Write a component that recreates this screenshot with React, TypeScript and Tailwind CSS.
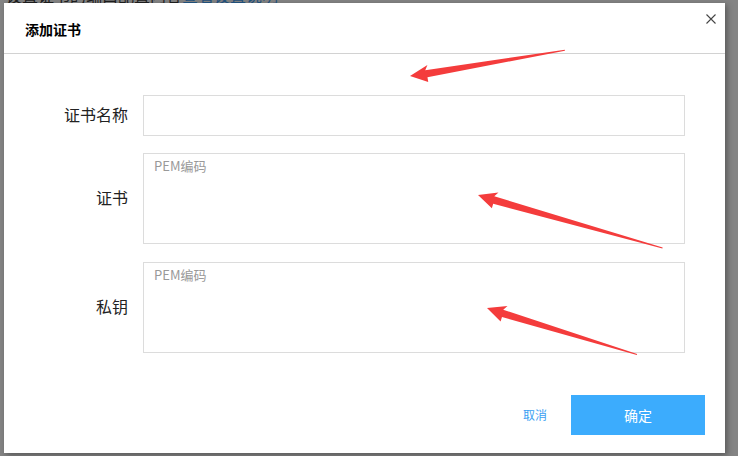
import React from "react";

// Arrow drawn with its tip at (0,0), body running along +x for `len` px
function Arrow({ x, y, angle, len }: { x: number; y: number; angle: number; len: number }) {
  const points = `0,0 19,-8 16,-3.2 ${len},-0.4 ${len},0.6 17,4.2 17,9`;
  return (
    <polygon
      points={points}
      fill="#f43c3c"
      transform={`translate(${x} ${y}) rotate(${angle})`}
    />
  );
}

export default function App() {
  const labelCls = "w-[124px] shrink-0 pb-[4px] text-right text-[16px] leading-[22px] text-[#222]";
  const boxCls = "ml-[15px] w-[542px] border border-[#dcdcdc] bg-white";

  return (
    <div
      className="relative w-[738px] h-[456px] overflow-hidden bg-[#848484]"
      style={{ fontFamily: '"Noto Sans CJK SC", "Noto Sans", sans-serif' }}
    >
      {/* page behind the overlay, only a sliver shows */}
      <div className="h-[3px] overflow-hidden pl-[6px]">
        <div className="-mt-[15px] whitespace-nowrap text-[16px] leading-[20px]">
          <span className="text-[#1c1c1c]">设置证书的端口配置内容</span>
          <span className="text-[#1f4f7a]">查看设置说明</span>
        </div>
      </div>

      {/* Dialog */}
      <div className="ml-[4px] w-[721px] h-[450px] bg-white flex flex-col shadow-[2px_2px_6px_rgba(0,0,0,0.35)]">
        <div className="h-[51px] border-b border-[#d2d2d2] flex items-start justify-between pl-[21px] pr-[9px]">
          <h2 className="mt-[16px] text-[14px] leading-[20px] font-bold text-black">添加证书</h2>
          <button className="mt-[11px] w-[10px] h-[10px]">
            <svg viewBox="0 0 10 10" className="w-[10px] h-[10px]">
              <path d="M0.5 0.5 L9.5 9.5 M9.5 0.5 L0.5 9.5" stroke="#444" strokeWidth="1.1" fill="none" />
            </svg>
          </button>
        </div>

        <div className="pt-[41px] flex flex-col">
          <div className="flex items-center">
            <label className={labelCls}>证书名称</label>
            <input type="text" className={`${boxCls} h-[41px] px-[10px] outline-none`} />
          </div>

          <div className="flex items-center mt-[17px]">
            <label className={labelCls}>证书</label>
            <textarea
              placeholder="PEM编码"
              className={`${boxCls} h-[91px] px-[10px] py-[3px] resize-none outline-none text-[13px] leading-[18px] placeholder:text-[#999]`}
            />
          </div>

          <div className="flex items-center mt-[18px]">
            <label className={labelCls}>私钥</label>
            <textarea
              placeholder="PEM编码"
              className={`${boxCls} h-[91px] px-[10px] py-[3px] resize-none outline-none text-[13px] leading-[18px] placeholder:text-[#999]`}
            />
          </div>
        </div>

        <div className="mt-[42px] flex justify-end items-center pr-[20px]">
          <button className="mr-[24px] text-[12px] text-[#3b9ff2]">取消</button>
          <button className="w-[134px] h-[40px] bg-[#3cacfd] text-white text-[14px]">确定</button>
        </div>
      </div>

      {/* annotation arrows over the dialog */}
      <svg className="absolute inset-0 pointer-events-none" width="738" height="456">
        <Arrow x={410} y={76} angle={-9.5} len={157} />
        <Arrow x={478} y={195} angle={16} len={192} />
        <Arrow x={487} y={308} angle={17.2} len={157} />
      </svg>
    </div>
  );
}
